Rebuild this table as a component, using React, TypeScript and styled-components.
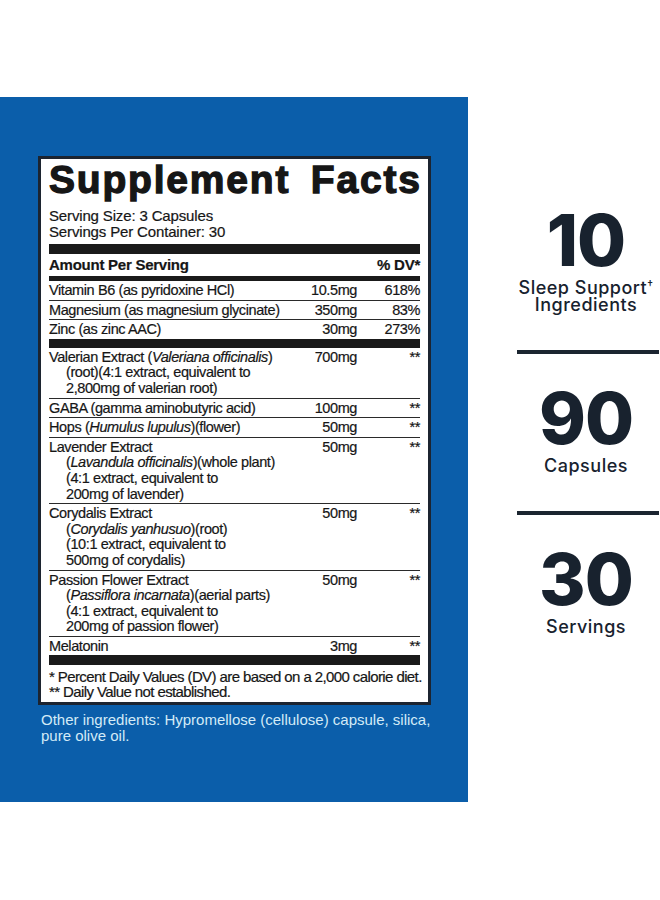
import React from "react";
import styled, { createGlobalStyle } from "styled-components";

const GlobalStyle = createGlobalStyle`
  body {
    margin: 0;
    background: #fff;
    font-family: "Liberation Sans", Arial, sans-serif;
  }
`;

const Page = styled.div`
  display: flex;
  align-items: flex-start;
  width: 660px;
  height: 900px;
  padding-top: 97px;
  box-sizing: border-box;
  overflow: hidden;
`;

const BluePanel = styled.div`
  flex: 0 0 468px;
  height: 705px;
  box-sizing: border-box;
  padding: 59px 0 0 38px;
  background: #0b5eaa;
`;

const Label = styled.div`
  width: 393px;
  box-sizing: border-box;
  border: 3px solid #1c2430;
  background: #fff;
  padding: 2px 8px 3px;
  color: #161616;
  -webkit-text-stroke: 0.2px #161616;
`;

const Title = styled.h1`
  margin: 0;
  font-size: 39px;
  line-height: 38px;
  font-weight: 700;
  letter-spacing: 1.8px;
  word-spacing: 8px;
  white-space: nowrap;
  -webkit-text-stroke: 1.3px #161616;
`;

const ServingInfo = styled.div`
  margin-top: 9px;
  font-size: 15px;
  line-height: 16px;
  letter-spacing: -0.15px;
`;

const Bar = styled.div<{ $h: number }>`
  height: ${(p) => p.$h}px;
  background: #1a1a1a;
`;

const Row = styled.div`
  display: grid;
  grid-template-columns: 1fr 76px 63px;
  font-size: 14.5px;
  line-height: 15.6px;
  letter-spacing: -0.4px;
  padding: 2px 0 1px;

  & + & {
    border-top: 1px solid #2a2a2a;
  }
`;

const HeaderRow = styled(Row)`
  font-weight: 700;
  font-size: 15px;
  line-height: 16px;
  letter-spacing: -0.25px;
  padding: 0;
  margin: 3px 0;
`;

const Line = styled.div<{ $indent?: boolean }>`
  white-space: nowrap;
  padding-left: ${(p) => (p.$indent ? 17 : 0)}px;
`;

const Cell = styled.div`
  text-align: right;
  white-space: nowrap;
`;

const Footnotes = styled.div`
  margin-top: 4px;
  font-size: 15px;
  line-height: 15px;
  letter-spacing: -0.6px;
  white-space: nowrap;
`;

const Ingredients = styled.p`
  margin: 7px 0 0 3px;
  color: #d3ebf7;
  font-size: 15px;
  line-height: 15.5px;
  white-space: nowrap;
`;

const Side = styled.div`
  width: 142px;
  margin-left: 49px;
  padding: 113px 4px 0 0;
  box-sizing: border-box;
  display: flex;
  flex-direction: column;
  align-items: center;
  color: #18222e;
  font-family: Inter, "Noto Sans", sans-serif;
`;

const StatNumber = styled.div`
  font-size: 71px;
  line-height: 60px;
  font-weight: 800;
  letter-spacing: -1px;
`;

const StatLabel = styled.div`
  margin-top: 9px;
  font-size: 18px;
  line-height: 17px;
  font-weight: 500;
  letter-spacing: 0.5px;
  text-align: center;
  white-space: nowrap;
`;

const Sup = styled.span`
  font-size: 11px;
  vertical-align: top;
  position: relative;
  top: -3px;
`;

const Divider = styled.div`
  align-self: stretch;
  margin: 37px -4px 34px 0;
  height: 4px;
  background: #1b2530;
`;

interface Item {
  lines: React.ReactNode[];
  amount: string;
  dv: string;
}

const vitamins: Item[] = [
  { lines: ["Vitamin B6 (as pyridoxine HCl)"], amount: "10.5mg", dv: "618%" },
  { lines: ["Magnesium (as magnesium glycinate)"], amount: "350mg", dv: "83%" },
  { lines: ["Zinc (as zinc AAC)"], amount: "30mg", dv: "273%" },
];

const blend: Item[] = [
  {
    lines: [
      <>Valerian Extract (<i>Valeriana officinalis</i>)</>,
      "(root)(4:1 extract, equivalent to",
      "2,800mg of valerian root)",
    ],
    amount: "700mg",
    dv: "**",
  },
  { lines: ["GABA (gamma aminobutyric acid)"], amount: "100mg", dv: "**" },
  { lines: [<>Hops (<i>Humulus lupulus</i>)(flower)</>], amount: "50mg", dv: "**" },
  {
    lines: [
      "Lavender Extract",
      <>(<i>Lavandula officinalis</i>)(whole plant)</>,
      "(4:1 extract, equivalent to",
      "200mg of lavender)",
    ],
    amount: "50mg",
    dv: "**",
  },
  {
    lines: [
      "Corydalis Extract",
      <>(<i>Corydalis yanhusuo</i>)(root)</>,
      "(10:1 extract, equivalent to",
      "500mg of corydalis)",
    ],
    amount: "50mg",
    dv: "**",
  },
  {
    lines: [
      "Passion Flower Extract",
      <>(<i>Passiflora incarnata</i>)(aerial parts)</>,
      "(4:1 extract, equivalent to",
      "200mg of passion flower)",
    ],
    amount: "50mg",
    dv: "**",
  },
  { lines: ["Melatonin"], amount: "3mg", dv: "**" },
];

const FactRows = ({ items }: { items: Item[] }) => (
  <div>
    {items.map((item, index) => (
      <Row key={index}>
        <div>
          {item.lines.map((line, i) => (
            <Line key={i} $indent={i > 0}>
              {line}
            </Line>
          ))}
        </div>
        <Cell>{item.amount}</Cell>
        <Cell>{item.dv}</Cell>
      </Row>
    ))}
  </div>
);

const App = () => {
  return (
    <>
      <GlobalStyle />
      <Page>
        <BluePanel>
          <Label>
            <Title>Supplement Facts</Title>
            <ServingInfo>
              Serving Size: 3 Capsules
              <br />
              Servings Per Container: 30
            </ServingInfo>
            <Bar $h={10} style={{ marginTop: 4 }} />
            <HeaderRow>
              <div>Amount Per Serving</div>
              <Cell />
              <Cell>% DV*</Cell>
            </HeaderRow>
            <Bar $h={5} />
            <FactRows items={vitamins} />
            <Bar $h={9} />
            <FactRows items={blend} />
            <Bar $h={10} />
            <Footnotes>
              * Percent Daily Values (DV) are based on a 2,000 calorie diet.
              <br />
              ** Daily Value not established.
            </Footnotes>
          </Label>
          <Ingredients>
            Other ingredients: Hypromellose (cellulose) capsule, silica,
            <br />
            pure olive oil.
          </Ingredients>
        </BluePanel>

        <Side>
          <StatNumber>10</StatNumber>
          <StatLabel>
            Sleep Support<Sup>†</Sup>
            <br />
            Ingredients
          </StatLabel>
          <Divider />
          <StatNumber>90</StatNumber>
          <StatLabel>Capsules</StatLabel>
          <Divider />
          <StatNumber>30</StatNumber>
          <StatLabel>Servings</StatLabel>
        </Side>
      </Page>
    </>
  );
};

export default App;
